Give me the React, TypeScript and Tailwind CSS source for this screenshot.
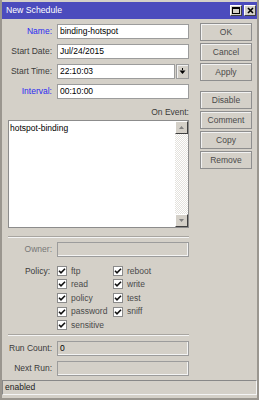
import React from 'react';

const font = "font-['Liberation_Sans',Arial,sans-serif]";

function Field({ label, value, blue, width = 'w-[132px]', disabled, dimLabel, children }: { label: string; value?: string; blue?: boolean; width?: string; disabled?: boolean; dimLabel?: boolean; children?: React.ReactNode }) {
  return (
    <div className="flex items-center h-[15px]">
      <div className={`w-[50px] text-right ${blue ? 'text-[#2a2af0]' : dimLabel ? 'text-[#777]' : 'text-[#3a3a3a]'}`}>{label}</div>
      <div className={`ml-[5px] h-[15px] ${width} border border-[#9c9c9c] px-[2px] flex items-center ${disabled ? 'bg-[#d4d0c8] shadow-[inset_-1px_-1px_0_#f4f4f4]' : 'bg-white'} text-black`}>
        {value}
      </div>
      {children}
    </div>
  );
}

function Btn({ label, className = '' }: { label: string; className?: string }) {
  return (
    <div className={`h-[18px] w-[52px] border border-[#8e8e8e] shadow-[inset_1px_1px_0_#f2f2f2] flex items-center justify-center text-[#4a4a4a] ${className}`}>
      {label}
    </div>
  );
}

function Check({ label }: { label: string }) {
  return (
    <div className="flex items-center h-[13.6px]">
      <div className="w-[10px] h-[10px] bg-white border border-[#8a8a8a] flex items-center justify-center">
        <svg width="8" height="8" viewBox="0 0 8 8">
          <path d="M1 3.8 L3 5.8 L7 1.8" stroke="#111" strokeWidth="1.6" fill="none" />
        </svg>
      </div>
      <span className="ml-[4px] text-[#4a4a4a]">{label}</span>
    </div>
  );
}

function Separator({ className = '' }: { className?: string }) {
  return <div className={`ml-[6px] w-[181px] h-[2px] border-t border-[#a8a5a0] border-b border-b-[#f4f4f4] ${className}`} />;
}

export default function App() {
  const left = ['ftp', 'read', 'policy', 'password', 'sensitive'];
  const right = ['reboot', 'write', 'test', 'sniff'];

  return (
    <div className={`w-[259px] h-[400px] bg-[#d4d0c8] border-x-2 border-b-2 border-[#9a968f] pt-[2px] flex flex-col text-[8.5px] leading-none ${font}`}>
      {/* title bar */}
      <div className="h-[17px] bg-[#4b4bbd] flex items-center pl-[4px] pr-[1px]">
        <span className="text-white text-[8.7px]">New Schedule</span>
        <div className="ml-auto flex gap-[2px]">
          <div className="w-[12px] h-[11px] bg-[#d4d0c8] border border-[#404040] border-t-white border-l-white flex items-center justify-center">
            <div className="w-[8px] h-[7px] border border-black border-t-2" />
          </div>
          <div className="w-[12px] h-[11px] bg-[#d4d0c8] border border-[#404040] border-t-white border-l-white flex items-center justify-center">
            <svg width="7" height="7" viewBox="0 0 7 7">
              <path d="M1 1 L6 6 M6 1 L1 6" stroke="#000" strokeWidth="1.6" />
            </svg>
          </div>
        </div>
      </div>

      <div className="flex flex-1">
        {/* left column */}
        <div className="w-[193px] pt-[5px] flex flex-col">
          <Field label="Name:" value="binding-hotspot" blue />
          <div className="mt-[5px]"><Field label="Start Date:" value="Jul/24/2015" /></div>
          <div className="mt-[5px]">
            <Field label="Start Time:" value="22:10:03" width="w-[118px]">
              <div className="ml-[1px] w-[13px] h-[15px] border border-[#9c9c9c] shadow-[inset_1px_1px_0_#f2f2f2] flex items-center justify-center">
                <svg width="7" height="7" viewBox="0 0 7 7">
                  <path d="M3.5 0 V2" stroke="#000" strokeWidth="1" />
                  <path d="M0.5 2.5 H6.5 L3.5 6 Z" fill="#000" />
                </svg>
              </div>
            </Field>
          </div>
          <div className="mt-[5px]"><Field label="Interval:" value="00:10:00" blue /></div>

          <div className="mt-[9px] h-[12px] w-[187px] text-right text-[#3a3a3a]">On Event:</div>
          <div className="ml-[6px] w-[181px] h-[108px] bg-white border border-[#8c8c8c] flex">
            <div className="flex-1 pl-[1px] pt-[3px] text-black">hotspot-binding</div>
            <div className="w-[13px] flex flex-col bg-[repeating-conic-gradient(#e4e2dd_0_25%,#ffffff_0_50%)] bg-[length:2px_2px]">
              <div className="h-[13px] bg-[#d4d0c8] border border-[#404040] border-t-white border-l-white flex items-center justify-center">
                <svg width="5" height="3" viewBox="0 0 5 3"><path d="M0 3 L2.5 0 L5 3 Z" fill="#808080" /></svg>
              </div>
              <div className="flex-1" />
              <div className="h-[13px] bg-[#d4d0c8] border border-[#404040] border-t-white border-l-white flex items-center justify-center">
                <svg width="5" height="3" viewBox="0 0 5 3"><path d="M0 0 L2.5 3 L5 0 Z" fill="#808080" /></svg>
              </div>
            </div>
          </div>

          <Separator className="mt-[8px]" />
          <div className="mt-[4px]"><Field label="Owner:" disabled dimLabel /></div>

          <div className="mt-[7px] flex">
            <div className="w-[48px] h-[13.6px] flex items-center justify-end text-[#3a3a3a]">Policy:</div>
            <div className="ml-[7px] w-[56px] flex flex-col">
              {left.map((l) => <Check key={l} label={l} />)}
            </div>
            <div className="flex flex-col">
              {right.map((l) => <Check key={l} label={l} />)}
            </div>
          </div>

          <Separator className="mt-[2px]" />
          <div className="mt-[5px]"><Field label="Run Count:" value="0" disabled /></div>
          <div className="mt-[5px]"><Field label="Next Run:" disabled /></div>
        </div>

        {/* buttons */}
        <div className="ml-[5px] pt-[4px] flex flex-col">
          <Btn label="OK" />
          <Btn label="Cancel" className="mt-[2px]" />
          <Btn label="Apply" className="mt-[2px]" />
          <Btn label="Disable" className="mt-[10px]" />
          <Btn label="Comment" className="mt-[2px]" />
          <Btn label="Copy" className="mt-[2px]" />
          <Btn label="Remove" className="mt-[2px]" />
        </div>
      </div>

      {/* status bar */}
      <div className="mb-[3px] h-[15px] border border-[#888] border-b-[#f4f4f4] border-r-[#f4f4f4] flex items-center pl-[2px] text-[#222]">
        enabled
      </div>
    </div>
  );
}
